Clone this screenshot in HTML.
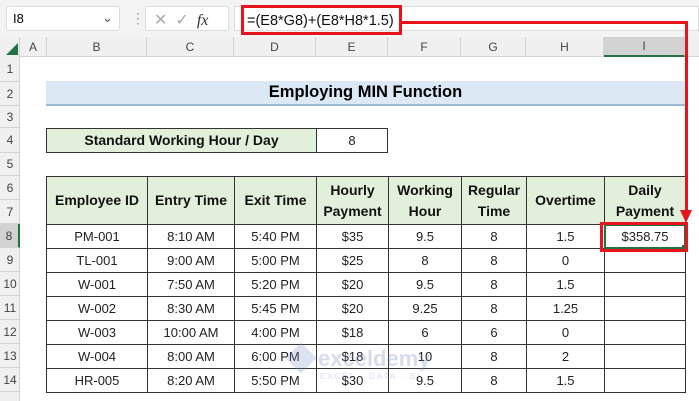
<!DOCTYPE html>
<html><head><style>
body{margin:0;width:699px;height:401px;overflow:hidden;background:#fff;font-family:"Liberation Sans",Calibri,sans-serif;position:relative}
.a{position:absolute;box-sizing:border-box}
.c{display:flex;align-items:center;justify-content:center;text-align:center}
.ch{font-size:12px;color:#444;border-right:1px solid #d4d4d4}
.rh{font-size:12px;color:#444;border-bottom:1px solid #d4d4d4;left:0;width:20px}
.td{border:1px solid #333;font-size:13px;color:#222}
.th{border:1px solid #333;background:#e2efda;font-weight:bold;font-size:14px;color:#111;line-height:21px}
</style></head><body>
<div class="a" style="left:0;top:0;width:699px;height:37px;background:#f3f3f3"></div>
<div class="a" style="left:6px;top:6px;width:114px;height:25px;background:#fff;border:1px solid #ddd;border-radius:3px;font-size:13px;padding:4px 6px">I8<span style="position:absolute;right:6px;top:3px;color:#555">&#8964;</span></div>
<div class="a" style="left:131px;top:10px;color:#999;font-size:14px">&#8942;</div>
<div class="a" style="left:145px;top:6px;width:84px;height:25px;background:#fff;border:1px solid #ddd;border-radius:3px;font-size:16px;color:#aaa;padding:3px 8px;letter-spacing:8px">&#10005;&#10003;<span style="color:#333;font-style:italic;font-family:'Liberation Serif',serif;letter-spacing:0">fx</span></div>
<div class="a" style="left:234px;top:6px;width:465px;height:25px;background:#fff;border:1px solid #ddd"></div>
<div class="a" style="left:241px;top:5px;width:161px;height:30px;border:3px solid #e8141c;font-size:14.5px;padding:5px 3px;color:#111;white-space:nowrap">=(E8*G8)+(E8*H8*1.5)</div>
<div class="a" style="left:0;top:37px;width:699px;height:20px;background:#f0f0f0;border-bottom:1px solid #d4d4d4"></div>
<div class="a" style="left:0;top:37px;width:20px;height:364px;background:#f0f0f0;border-right:1px solid #d4d4d4"></div>
<div class="a" style="left:6px;top:43px;width:0;height:0;border-left:12px solid transparent;border-bottom:12px solid #217346"></div>
<div class="a ch c" style="left:20px;top:37px;width:27px;height:20px">A</div>
<div class="a ch c" style="left:47px;top:37px;width:100px;height:20px">B</div>
<div class="a ch c" style="left:147px;top:37px;width:87px;height:20px">C</div>
<div class="a ch c" style="left:234px;top:37px;width:82px;height:20px">D</div>
<div class="a ch c" style="left:316px;top:37px;width:72px;height:20px">E</div>
<div class="a ch c" style="left:388px;top:37px;width:73px;height:20px">F</div>
<div class="a ch c" style="left:461px;top:37px;width:65px;height:20px">G</div>
<div class="a ch c" style="left:526px;top:37px;width:78px;height:20px">H</div>
<div class="a ch c" style="left:604px;top:37px;width:81px;height:20px;background:#d2d2d2;border-bottom:2px solid #217346">I</div>
<div class="a rh c" style="top:57px;height:25px">1</div>
<div class="a rh c" style="top:82px;height:24px">2</div>
<div class="a rh c" style="top:106px;height:22px">3</div>
<div class="a rh c" style="top:128px;height:25px">4</div>
<div class="a rh c" style="top:153px;height:23px">5</div>
<div class="a rh c" style="top:176px;height:24px">6</div>
<div class="a rh c" style="top:200px;height:24px">7</div>
<div class="a rh c" style="top:224px;height:24px;background:#d2d2d2;border-right:2px solid #217346">8</div>
<div class="a rh c" style="top:248px;height:24px">9</div>
<div class="a rh c" style="top:272px;height:24px">10</div>
<div class="a rh c" style="top:296px;height:24px">11</div>
<div class="a rh c" style="top:320px;height:24px">12</div>
<div class="a rh c" style="top:344px;height:24px">13</div>
<div class="a rh c" style="top:368px;height:24px">14</div>
<div class="a c" style="left:46px;top:81px;width:639px;height:25px;background:#dce9f5;border-bottom:2px solid #9bbbd9;font-weight:bold;font-size:16.5px">Employing MIN Function</div>
<div class="a th c" style="left:46px;top:128px;width:271px;height:25px">Standard Working Hour / Day</div>
<div class="a td c" style="left:316px;top:128px;width:72px;height:25px">8</div>
<div id="t"></div>
<script>
var cols=[46,147,234,316,388,461,526,604,685];
var hd=["Employee ID","Entry Time","Exit Time","Hourly<br>Payment","Working<br>Hour","Regular<br>Time","Overtime","Daily<br>Payment"];
var rows=[["PM-001","8:10 AM","5:40 PM","$35","9.5","8","1.5","$358.75"],["TL-001","9:00 AM","5:00 PM","$25","8","8","0",""],["W-001","7:50 AM","5:20 PM","$20","9.5","8","1.5",""],["W-002","8:30 AM","5:45 PM","$20","9.25","8","1.25",""],["W-003","10:00 AM","4:00 PM","$18","6","6","0",""],["W-004","8:00 AM","6:00 PM","$18","10","8","2",""],["HR-005","8:20 AM","5:50 PM","$30","9.5","8","1.5",""]];
var h="";
for(var i=0;i<8;i++){var w=cols[i+1]-cols[i]+1;
h+='<div class="a th c" style="left:'+cols[i]+'px;top:176px;width:'+w+'px;height:49px">'+hd[i]+'</div>';
for(var r=0;r<7;r++)h+='<div class="a td c" style="left:'+cols[i]+'px;top:'+(224+r*24)+'px;width:'+w+'px;height:25px">'+rows[r][i]+'</div>';}
document.getElementById("t").innerHTML=h;
</script>
<div class="a" style="left:604px;top:224px;width:82px;height:25px;border:2px solid #217346"></div>
<div class="a" style="left:682px;top:245px;width:5px;height:5px;background:#217346"></div>
<div class="a" style="left:600px;top:222px;width:88px;height:30px;border:3px solid #e8141c"></div>
<div class="a" style="left:402px;top:21px;width:286px;height:3px;background:#e8141c"></div>
<div class="a" style="left:685px;top:21px;width:3px;height:190px;background:#e8141c"></div>
<div class="a" style="left:680px;top:210px;width:0;height:0;border-left:6px solid transparent;border-right:6px solid transparent;border-top:13px solid #e8141c"></div>
<div class="a" style="left:290px;top:347px;width:22px;height:22px;background:rgba(120,140,200,0.25);transform:rotate(45deg)"></div>
<div class="a" style="left:318px;top:346px;font-size:22px;color:rgba(120,140,200,0.3);font-weight:bold">exceldemy</div>
<div class="a" style="left:320px;top:372px;font-size:8px;color:rgba(120,140,200,0.3);letter-spacing:2px">EXCEL · DATA · BI</div>
</body></html>
